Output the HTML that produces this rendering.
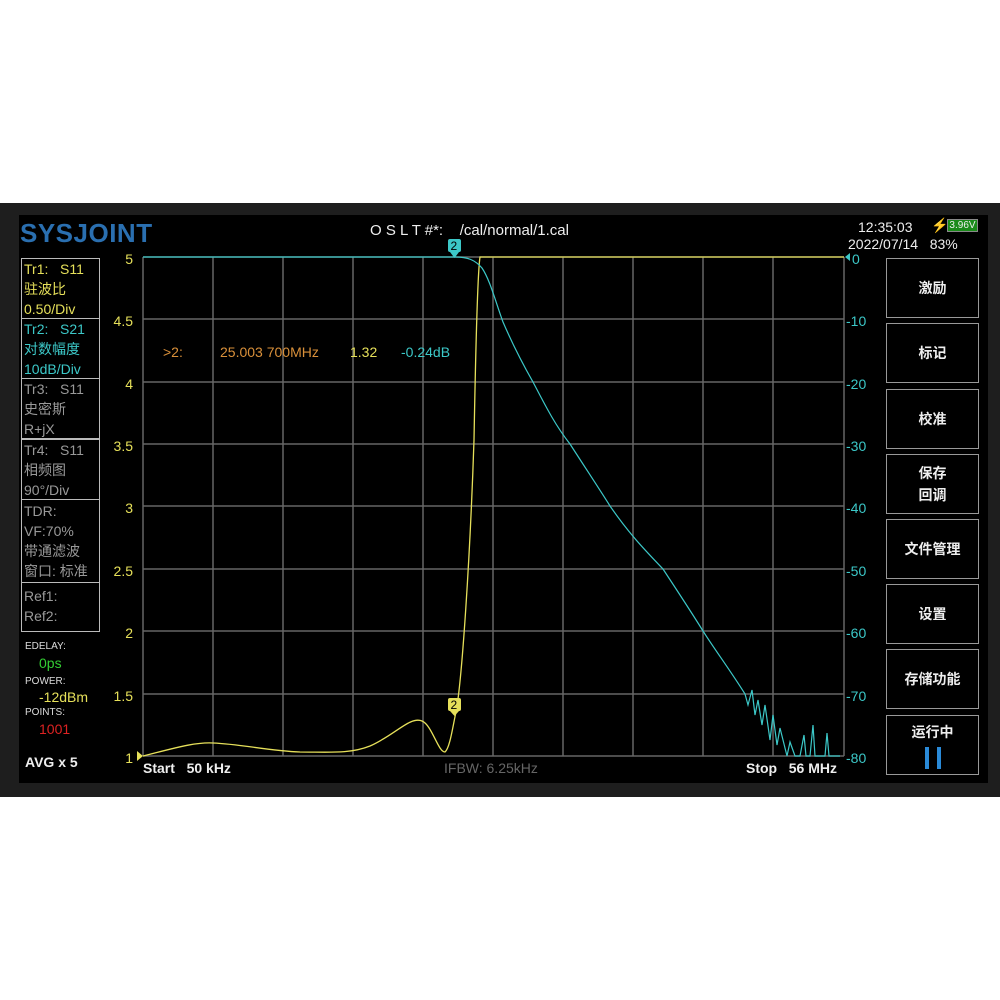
<!DOCTYPE html><html><head><meta charset="utf-8"><style>
body{margin:0;width:1000px;height:1000px;background:#fff;position:relative;overflow:hidden;font-family:"Liberation Sans","Noto Sans CJK SC",sans-serif}
.f{position:absolute;left:0;top:203px;width:1000px;height:594px;background:#1e1e1e}
.s{position:absolute;left:19px;top:215px;width:969px;height:568px;background:#000}
.t{position:absolute;white-space:nowrap;font-size:14px}
.lb{position:absolute;left:21px;width:79px;border:1px solid #bbb;box-sizing:border-box}
.lb div{height:20px;line-height:20px;font-size:14px;padding-left:2px}
.b{position:absolute;left:886px;width:93px;height:60px;border:1px solid #999;box-sizing:border-box;color:#eee;font-size:14px;font-weight:bold;display:flex;align-items:center;justify-content:center;text-align:center;line-height:22px}
.y{color:#e6e05a}.c{color:#3cc8c8}.g{color:#999}
</style></head><body>
<div class="f"></div><div class="s"></div>
<div class="t" style="left:20px;top:218px;font-size:26px;font-weight:bold;color:#2a6fb0;letter-spacing:0.5px">SYSJOINT</div>
<div class="t" style="left:370px;top:222px;color:#eee;font-size:15px">O S L T #*: &nbsp;&nbsp; /cal/normal/1.cal</div>
<div class="t" style="left:858px;top:219px;color:#eee;font-size:14px">12:35:03</div>
<div class="t" style="left:931px;top:217px;color:#e6c020;font-size:14px">⚡</div>
<div style="position:absolute;left:947px;top:219px;width:31px;height:13px;border:1px solid #888;box-sizing:border-box;background:#1a8a1a;color:#eee;font-size:10px;line-height:11px;text-align:center">3.96V</div>
<div class="t" style="left:848px;top:236px;color:#eee;font-size:14px">2022/07/14 &nbsp;&nbsp;83%</div>
<div class="lb" style="top:258px;height:61px"><div class="y">Tr1: &nbsp; S11</div><div class="y">驻波比</div><div class="y">0.50/Div</div></div>
<div class="lb" style="top:318px;height:61px"><div class="c">Tr2: &nbsp; S21</div><div class="c">对数幅度</div><div class="c">10dB/Div</div></div>
<div class="lb" style="top:378px;height:61px"><div class="g">Tr3: &nbsp; S11</div><div class="g">史密斯</div><div class="g">R+jX</div></div>
<div class="lb" style="top:439px;height:61px"><div class="g">Tr4: &nbsp; S11</div><div class="g">相频图</div><div class="g">90°/Div</div></div>
<div class="lb" style="top:499px;height:84px;padding-top:1px"><div class="g">TDR:</div><div class="g">VF:70%</div><div class="g">带通滤波</div><div class="g">窗口: 标准</div></div>
<div class="lb" style="top:582px;height:50px;padding-top:3px"><div class="g">Ref1:</div><div class="g">Ref2:</div></div>
<div class="t" style="left:25px;top:641px;color:#ddd;font-size:10px">EDELAY:</div>
<div class="t" style="left:39px;top:655px;color:#3c3;font-size:14px">0ps</div>
<div class="t" style="left:25px;top:676px;color:#ddd;font-size:10px">POWER:</div>
<div class="t" style="left:39px;top:689px;color:#e6e05a;font-size:14px">-12dBm</div>
<div class="t" style="left:25px;top:707px;color:#ddd;font-size:10px">POINTS:</div>
<div class="t" style="left:39px;top:721px;color:#d22;font-size:14px">1001</div>
<div class="t" style="left:25px;top:754px;color:#eee;font-size:14px;font-weight:bold">AVG x 5</div>
<svg style="position:absolute;left:0;top:0" width="1000" height="1000">
<g stroke="#666" stroke-width="1.5" fill="none">
<path d="M143 257V756M213 257V756M283 257V756M353 257V756M423 257V756M493 257V756M563 257V756M633 257V756M703 257V756M773 257V756M844 257V756"/>
<path d="M143 257H844M143 319H844M143 382H844M143 444H844M143 506H844M143 569H844M143 631H844M143 694H844M143 756H844"/>
</g>
<g font-size="14" fill="#e6e05a" text-anchor="end">
<text x="133" y="264">5</text><text x="133" y="326">4.5</text><text x="133" y="389">4</text><text x="133" y="451">3.5</text><text x="133" y="513">3</text><text x="133" y="576">2.5</text><text x="133" y="638">2</text><text x="133" y="701">1.5</text><text x="133" y="763">1</text></g>
<g font-size="14" fill="#3cc8c8">
<text x="852" y="264">0</text><text x="846" y="326">-10</text><text x="846" y="389">-20</text><text x="846" y="451">-30</text><text x="846" y="513">-40</text><text x="846" y="576">-50</text><text x="846" y="638">-60</text><text x="846" y="701">-70</text><text x="846" y="763">-80</text></g>
<path d="M137 751l6 5-6 5z" fill="#e6e05a"/><path d="M850 253l-5 4 5 4z" fill="#3cc8c8"/>
<path d="M143 756C175 748 195 742 213 743C240 744 270 751 300 752C330 752 350 754 370 746C395 735 410 716 422 721C432 725 438 752 445 752C450 748 453 725 456 712C462 680 470 560 474 440C476 330 478 270 480 257H844" fill="none" stroke="#e6e05a" stroke-width="1.3"/>
<path d="M143 257H455C468 257 475 260 482 268C490 280 495 300 503 322C515 350 525 368 533 382C545 405 555 425 570 444C590 475 600 490 610 506C630 535 645 550 663 569C680 595 690 610 703 631C715 650 730 670 745 694L748 705 752 690 755 715 758 700 762 725 765 705 770 740 773 715 777 745 780 728 783 740 787 756 790 742 795 756H800L804 735 806 756H810L813 725 815 756H825L827 733 829 756H840" fill="none" stroke="#3cc8c8" stroke-width="1.2"/>
<rect x="448" y="239" width="13" height="13" rx="2" fill="#3cc8c8"/><path d="M450 252l4.5 6 4.5-6z" fill="#3cc8c8"/><text x="450.5" y="250" font-size="12" fill="#000">2</text>
<rect x="448" y="698" width="13" height="13" rx="2" fill="#e6e05a"/><path d="M450 711l4.5 5 4.5-5z" fill="#e6e05a"/><text x="450.5" y="709" font-size="12" fill="#000">2</text>
</svg>
<div class="t" style="left:163px;top:344px;color:#d9903a;font-size:14px">&gt;2:</div>
<div class="t" style="left:220px;top:344px;color:#d9903a;font-size:14px">25.003 700MHz</div>
<div class="t" style="left:350px;top:344px;color:#e6e05a;font-size:14px">1.32</div>
<div class="t" style="left:401px;top:344px;color:#3cc8c8;font-size:14px">-0.24dB</div>
<div class="t" style="left:143px;top:760px;color:#eee;font-size:14px;font-weight:bold">Start &nbsp;&nbsp;50 kHz</div>
<div class="t" style="left:444px;top:760px;color:#666;font-size:14px">IFBW: 6.25kHz</div>
<div class="t" style="left:746px;top:760px;color:#eee;font-size:14px;font-weight:bold">Stop &nbsp;&nbsp;56 MHz</div>
<div class="b" style="top:258px">激励</div>
<div class="b" style="top:323px">标记</div>
<div class="b" style="top:389px">校准</div>
<div class="b" style="top:454px">保存<br>回调</div>
<div class="b" style="top:519px">文件管理</div>
<div class="b" style="top:584px">设置</div>
<div class="b" style="top:649px">存储功能</div>
<div class="b" style="top:715px;flex-direction:column">运行中<div style="display:flex;gap:8px;margin-top:4px"><div style="width:4px;height:22px;background:#2a8ad8"></div><div style="width:4px;height:22px;background:#2a8ad8"></div></div></div>
</body></html>
